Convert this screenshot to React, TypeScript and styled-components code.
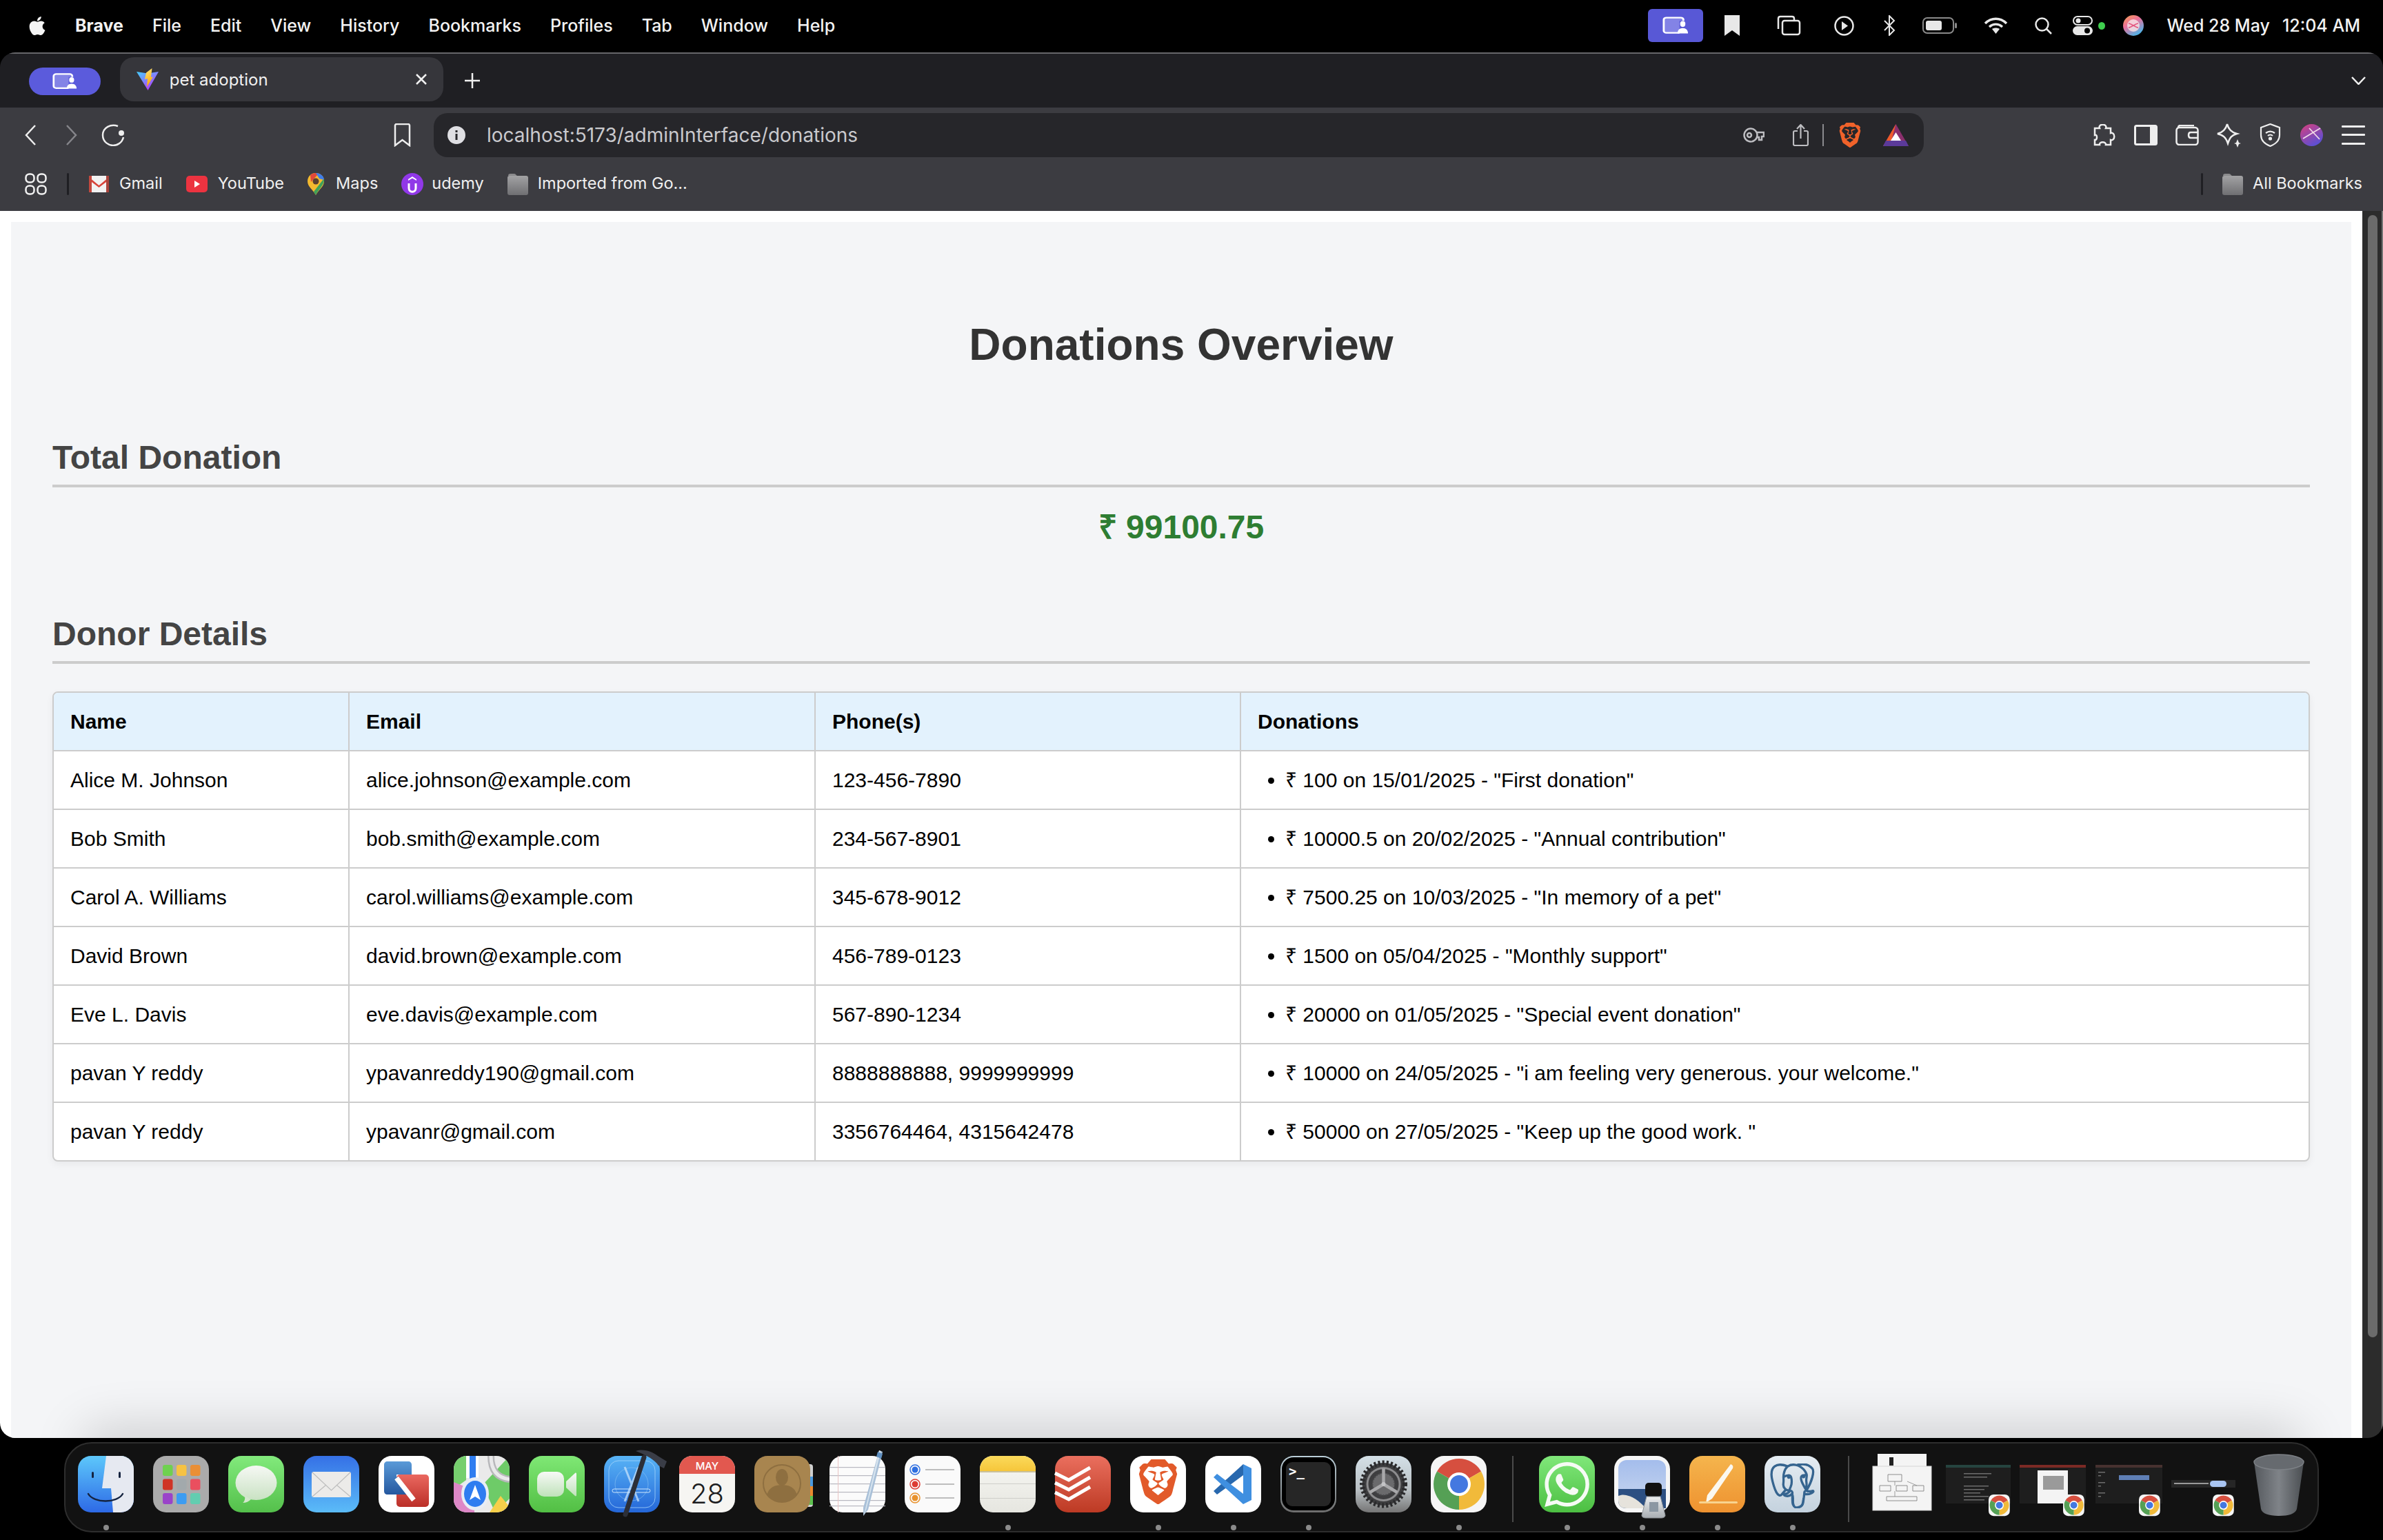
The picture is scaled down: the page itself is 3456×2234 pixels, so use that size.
import React from 'react'
import styled, { createGlobalStyle } from 'styled-components'
import { FaApple } from 'react-icons/fa'
import { SiBrave, SiPostgresql, SiWhatsapp } from 'react-icons/si'

const sysFont = `Inter, "Noto Sans", "Liberation Sans", sans-serif`

const GlobalStyle = createGlobalStyle`
  html, body {
    margin: 0;
    padding: 0;
    background: #000;
    overflow: hidden;
  }
  * { box-sizing: border-box; }
`

const Screen = styled.div`
  width: 3456px;
  height: 2234px;
  background: #000;
  display: flex;
  flex-direction: column;
  overflow: hidden;
`

/* ---------- mac menu bar ---------- */

const MenuBar = styled.div`
  height: 76px;
  flex-shrink: 0;
  display: flex;
  align-items: center;
  padding: 0 33px 2px 41px;
  color: #f2f2f2;
  font-family: ${sysFont};
  font-size: 25px;
  font-weight: 500;
`

const MenuList = styled.div`
  display: flex;
  align-items: center;
  gap: 42px;
`

const AppleMark = styled(FaApple)`
  width: 26px;
  height: 31px;
  color: #f5f5f5;
`

const AppName = styled.span`
  font-weight: 700;
`

const StatusArea = styled.div`
  margin-left: auto;
  display: flex;
  align-items: center;
  color: #e8e8e8;
`

const Ico = styled.svg<{ $ml?: number }>`
  display: block;
  flex-shrink: 0;
  margin-left: ${p => p.$ml || 0}px;
`

const SharePill = styled.div`
  width: 80px;
  height: 48px;
  border-radius: 6px;
  background: #5858d6;
  display: flex;
  align-items: center;
  justify-content: center;
`

const GreenDot = styled.span`
  width: 10px;
  height: 11px;
  margin-left: 8px;
  border-radius: 50%;
  background: #3fcf4e;
`

const Clock = styled.div`
  margin-left: 33px;
  display: flex;
  gap: 18px;
  color: #f2f2f2;
  white-space: nowrap;
`

/* ---------- browser window ---------- */

const BrowserWindow = styled.div`
  height: 2010px;
  flex-shrink: 0;
  display: flex;
  flex-direction: column;
  border-radius: 22px;
  overflow: hidden;
  position: relative;
`

const TabStrip = styled.div`
  height: 80px;
  flex-shrink: 0;
  display: flex;
  align-items: center;
  background: #1f1f23;
  border-top: 2px solid #67676a;
  padding: 0 25px 0 42px;
  color: #f0f0f0;
  font-family: ${sysFont};
`

const ProfilePill = styled.div`
  width: 104px;
  height: 40px;
  margin-top: 2px;
  border-radius: 20px;
  background: #5b5bdc;
  display: flex;
  align-items: center;
  justify-content: center;
`

const Tab = styled.div`
  width: 470px;
  height: 64px;
  margin-left: 28px;
  margin-top: -4px;
  padding: 0 24px;
  border-radius: 20px;
  background: #36363b;
  display: flex;
  align-items: center;
  font-size: 24px;
`

const TabTitle = styled.span`
  margin-left: 16px;
`

const TabClose = styled.svg`
  margin-left: auto;
`

const Toolbar = styled.div`
  height: 72px;
  flex-shrink: 0;
  display: flex;
  align-items: flex-end;
  background: #3c3c41;
  padding: 0 26px 0 36px;
  color: #eeeeee;
`

const ToolbarSlot = styled.div`
  height: 64px;
  display: flex;
  align-items: center;
`

const UrlBar = styled.div`
  width: 2161px;
  height: 64px;
  margin-left: 33px;
  padding: 0 22px 0 20px;
  border-radius: 20px;
  background: #26262a;
  display: flex;
  align-items: center;
  font-family: ${sysFont};
  font-size: 28px;
  color: #c9c9cd;
`

const UrlText = styled.span`
  margin-left: 31px;
`

const UrlActions = styled.div`
  margin-left: auto;
  display: flex;
  align-items: center;
  color: #bdbdc1;
`

const UrlDivider = styled.span`
  width: 2px;
  height: 32px;
  margin-left: 20px;
  background: #8a8a8e;
`

const ToolbarRight = styled.div`
  margin-left: auto;
  display: flex;
  align-items: center;
`

const BookmarksBar = styled.div`
  height: 78px;
  flex-shrink: 0;
  display: flex;
  align-items: center;
  background: #3c3c41;
  padding: 0 30px 0 36px;
  color: #f0f0f0;
  font-family: ${sysFont};
  font-size: 23.5px;
`

const BarDivider = styled.span<{ $last?: boolean }>`
  width: 3px;
  height: 32px;
  margin-left: ${p => (p.$last ? 'auto' : '29px')};
  border-radius: 2px;
  background: #1f1f23;
`

const BookmarkList = styled.div`
  margin-left: 29px;
  display: flex;
  align-items: center;
  gap: 34px;
`

const Bookmark = styled.div<{ $gap?: number }>`
  display: flex;
  align-items: center;
  gap: ${p => p.$gap || 15}px;
  white-space: nowrap;

  & > span {
    padding-bottom: 3px;
  }
`

const AllBookmarks = styled(Bookmark)`
  margin-left: 28px;
`

const Viewport = styled.div`
  flex: 1;
  min-height: 0;
  display: flex;
`

const PageFrame = styled.main`
  flex: 1;
  padding: 16px 16px 0;
  background: #fff;
  display: flex;
  position: relative;
  overflow: hidden;
`

/* dock shadow that falls over the bottom of the page */
const DockShadow = styled.div`
  position: absolute;
  left: 130px;
  right: 100px;
  bottom: -40px;
  height: 40px;
  border-radius: 20px;
  box-shadow: 0 0 70px 14px rgba(0, 0, 0, 0.17);
`

const ScrollTrack = styled.div`
  width: 30px;
  flex-shrink: 0;
  padding: 6px 6px 0 8px;
  background: #2c2c2c;
  border-right: 2px solid #747474;
`

const ScrollThumb = styled.div`
  height: 1628px;
  border-radius: 8px;
  background: #6b6b6b;
`

/* ---------- page content ---------- */

const Page = styled.div`
  flex: 1;
  padding: 96px 60px 0;
  background: #f4f5f7;
  font-family: "Liberation Sans", Arial, sans-serif;
`

const PageTitle = styled.h1`
  margin: 45px 0 100px;
  font-size: 64px;
  line-height: 74px;
  font-weight: 700;
  color: #333;
  text-align: center;
`

const Section = styled.section`
  margin-bottom: 101px;
`

const SectionTitle = styled.h2`
  margin: 0;
  padding-bottom: 12px;
  border-bottom: 4px solid #ccc;
  font-size: 48px;
  line-height: 54px;
  font-weight: 700;
  color: #444;
`

const TotalAmount = styled.div`
  margin-top: 31px;
  font-size: 48px;
  line-height: 54px;
  font-weight: 700;
  color: #2e7d32;
  text-align: center;
`

const TableWrap = styled.div`
  margin-top: 40px;
  border: 2px solid #ccc;
  border-radius: 8px;
  overflow: hidden;
  background: #fff;
  box-shadow: 0 4px 12px rgba(0, 0, 0, 0.05);
`

const Table = styled.table`
  width: 100%;
  border-collapse: collapse;
  table-layout: fixed;
  font-size: 30px;
  line-height: 35px;
  color: #000;
`

const HeadCell = styled.th`
  padding: 24px;
  background: #e3f2fd;
  border-left: 2px solid #ccc;
  border-bottom: 2px solid #ccc;
  font-weight: 700;
  text-align: left;

  &:first-child {
    border-left: none;
  }
`

const Cell = styled.td`
  padding: 24px;
  border-left: 2px solid #ccc;
  border-top: 2px solid #ccc;
  vertical-align: top;

  &:first-child {
    border-left: none;
  }
`

const DonationList = styled.ul`
  margin: 0;
  padding: 0 0 0 40px;
`

/* ---------- dock ---------- */

const Dock = styled.div`
  width: 3270px;
  height: 131px;
  margin: 6px 0 0 93px;
  padding: 18px 0 0 18px;
  flex-shrink: 0;
  display: flex;
  gap: 28px;
  border: 2px solid #2e2e2e;
  border-radius: 40px;
  background: #121212;
`

const DockItem = styled.div`
  width: 81px;
  flex-shrink: 0;
  display: flex;
  flex-direction: column;
  align-items: center;
`

const DockIcon = styled.svg`
  display: block;
  width: 81px;
  height: 82px;
  overflow: visible;
  flex-shrink: 0;
`

const RunDot = styled.span<{ $on?: boolean }>`
  width: 8px;
  height: 8px;
  margin-top: 18px;
  border-radius: 50%;
  background: ${p => (p.$on ? '#8b8b8b' : 'transparent')};
`

const DockDivider = styled.span<{ $l: number; $r: number }>`
  width: 2px;
  height: 96px;
  margin: 0 ${p => p.$r}px 0 ${p => p.$l}px;
  flex-shrink: 0;
  background: #4a4a4a;
`

const ThumbRow = styled.div`
  display: flex;
  margin-top: -3px;
`

const Thumb = styled.svg<{ $ml: number }>`
  display: block;
  height: 90px;
  margin-left: ${p => p.$ml}px;
  overflow: visible;
  flex-shrink: 0;
`

/* ---------- data ---------- */

const menuItems = ['File', 'Edit', 'View', 'History', 'Bookmarks', 'Profiles', 'Tab', 'Window', 'Help']

const donors = [
  { name: 'Alice M. Johnson', email: 'alice.johnson@example.com', phone: '123-456-7890', donation: '₹ 100 on 15/01/2025 - "First donation"' },
  { name: 'Bob Smith', email: 'bob.smith@example.com', phone: '234-567-8901', donation: '₹ 10000.5 on 20/02/2025 - "Annual contribution"' },
  { name: 'Carol A. Williams', email: 'carol.williams@example.com', phone: '345-678-9012', donation: '₹ 7500.25 on 10/03/2025 - "In memory of a pet"' },
  { name: 'David Brown', email: 'david.brown@example.com', phone: '456-789-0123', donation: '₹ 1500 on 05/04/2025 - "Monthly support"' },
  { name: 'Eve L. Davis', email: 'eve.davis@example.com', phone: '567-890-1234', donation: '₹ 20000 on 01/05/2025 - "Special event donation"' },
  { name: 'pavan Y reddy', email: 'ypavanreddy190@gmail.com', phone: '8888888888, 9999999999', donation: '₹ 10000 on 24/05/2025 - "i am feeling very generous. your welcome."' },
  { name: 'pavan Y reddy', email: 'ypavanr@gmail.com', phone: '3356764464, 4315642478', donation: '₹ 50000 on 27/05/2025 - "Keep up the good work. "' },
]

/* ---------- small browser / menu icons ---------- */

const ShareScreenIcon = ({ w, h, cut }: { w: number; h: number; cut: string }) => (
  <svg width={w} height={h} viewBox="0 0 40 34" preserveAspectRatio="none">
    <rect x="2" y="2" width="30" height="29" rx="4" fill="#8383e6" stroke="#fff" strokeWidth="3" />
    <rect x="26" y="8" width="14" height="26" fill={cut} />
    <ellipse cx="31" cy="14" rx="4" ry="5.500" fill="#fff" />
    <path d="M23 32c0-6 3-10 8-10s8 4 8 10z" fill="#fff" />
  </svg>
)

const ViteLogo = () => (
  <Ico width={32} height={32} viewBox="0 0 32 32">
    <defs>
      <linearGradient id="viteA" x1="0" y1="0" x2="0.7" y2="1">
        <stop offset="0" stopColor="#41d1ff" />
        <stop offset="1" stopColor="#bd34fe" />
      </linearGradient>
      <linearGradient id="viteB" x1="0" y1="0" x2="0.3" y2="1">
        <stop offset="0" stopColor="#ffea83" />
        <stop offset="1" stopColor="#ffa800" />
      </linearGradient>
    </defs>
    <path d="M0 5l16 2.500L32 5 16.500 32z" fill="url(#viteA)" />
    <path d="M14 6.500L22.500 0 21 13l3-.5L15 27l1-12-4 1z" fill="url(#viteB)" />
  </Ico>
)

const FolderIcon = () => (
  <Ico width={30} height={32} viewBox="0 0 30 32">
    <defs>
      <linearGradient id="folderG" x1="0" y1="0" x2="0" y2="1">
        <stop offset="0" stopColor="#a2a2a4" />
        <stop offset="1" stopColor="#6f6f72" />
      </linearGradient>
    </defs>
    <path d="M1 4c0-2 1-3 3-3h6c2 0 3 3 4 3z" fill="#8a8a8c" />
    <rect y="4" width="30" height="28" rx="3" fill="url(#folderG)" />
  </Ico>
)

/* ---------- dock icons, all on an 81x82 box ---------- */

const Squircle = ({ fill }: { fill: string }) => <rect width="81" height="82" rx="19" fill={fill} />

const FinderIcon = () => (
  <DockIcon viewBox="0 0 81 82">
    <defs>
      <linearGradient id="finderG" x1="0" y1="0" x2="0" y2="1">
        <stop offset="0" stopColor="#5dc8fb" />
        <stop offset="1" stopColor="#2d69e6" />
      </linearGradient>
      <clipPath id="finderClip"><rect width="81" height="82" rx="19" /></clipPath>
    </defs>
    <Squircle fill="url(#finderG)" />
    <path d="M41 0L35 47H48L51 82H81V0Z" fill="#e6e9f1" clipPath="url(#finderClip)" />
    <rect x="20" y="23" width="3" height="9" rx="1.500" fill="#15233f" />
    <rect x="59" y="23" width="3" height="9" rx="1.500" fill="#15233f" />
    <path d="M15 55c8 14 42 14 50 0" fill="none" stroke="#15233f" strokeWidth="2.500" strokeLinecap="round" />
  </DockIcon>
)

const launchColors = ['#6fd14f', '#f6c243', '#ea8f36', '#cf3426', '#a2a9ac', '#ea4f5f', '#9a43c9', '#3d9cf1', '#62cdb0']

const LaunchpadIcon = () => (
  <DockIcon viewBox="0 0 81 82">
    <Squircle fill="#ababab" />
    {launchColors.map((c, i) => (
      <rect key={c} x={14 + (i % 3) * 20} y={13 + Math.floor(i / 3) * 20.5} width="14.500" height="16" rx="3" fill={c} />
    ))}
  </DockIcon>
)

const MessagesIcon = () => (
  <DockIcon viewBox="0 0 81 82">
    <defs>
      <linearGradient id="msgG" x1="0" y1="0" x2="0" y2="1">
        <stop offset="0" stopColor="#82ea7c" />
        <stop offset="1" stopColor="#54c04b" />
      </linearGradient>
      <linearGradient id="msgB" x1="0" y1="0" x2="0" y2="1">
        <stop offset="0" stopColor="#f6f8f4" />
        <stop offset="1" stopColor="#c9e2c3" />
      </linearGradient>
    </defs>
    <Squircle fill="url(#msgG)" />
    <ellipse cx="40.500" cy="39" rx="30" ry="25" fill="url(#msgB)" />
    <path d="M24 58c1 5-1 9-3 10 5 0 9-2 12-5z" fill="#d3e7cd" />
  </DockIcon>
)

const MailIcon = () => (
  <DockIcon viewBox="0 0 81 82">
    <defs>
      <linearGradient id="mailG" x1="0" y1="0" x2="0" y2="1">
        <stop offset="0" stopColor="#3570e6" />
        <stop offset="1" stopColor="#5bbcf8" />
      </linearGradient>
    </defs>
    <Squircle fill="url(#mailG)" />
    <rect x="12" y="23" width="57" height="37" rx="3" fill="#ecebe9" />
    <path d="M13 24l27.500 26L68 24M13 59l20-17M68 59L48 42" fill="none" stroke="#bdbdbd" strokeWidth="1.200" />
  </DockIcon>
)

const ParallelsIcon = () => (
  <DockIcon viewBox="0 0 81 82">
    <defs>
      <linearGradient id="parB" x1="0" y1="0" x2="0" y2="1">
        <stop offset="0" stopColor="#5a9ad8" />
        <stop offset="1" stopColor="#25589f" />
      </linearGradient>
      <linearGradient id="parR" x1="0" y1="0" x2="0" y2="1">
        <stop offset="0" stopColor="#ea6860" />
        <stop offset="1" stopColor="#bb2f28" />
      </linearGradient>
    </defs>
    <Squircle fill="#ffffff" />
    <rect x="26" y="27" width="47" height="47" rx="5" fill="url(#parR)" />
    <path d="M13 8h30c3 0 5 2 5 5v14H26v3l22 26H13c-3 0-5-2-5-5V13c0-3 2-5 5-5z" fill="url(#parB)" />
    <path d="M26 32l25 32" stroke="#fff" strokeWidth="7" />
  </DockIcon>
)

const MapsIcon = () => (
  <DockIcon viewBox="0 0 81 82">
    <defs><clipPath id="mapClip"><rect width="81" height="82" rx="19" /></clipPath></defs>
    <g clipPath="url(#mapClip)">
      <rect width="81" height="82" fill="#eaeaea" />
      <path d="M42 42L81 0V62L60 82z" fill="#6ecb68" />
      <path d="M0 0H18V35L0 48z" fill="#76cf6e" />
      <path d="M0 38L30 50V82H0z" fill="#dd87c7" />
      <path d="M52 82l16-24 13 16v8z" fill="#f6cf4a" />
      <path d="M18 0h18v32H18z" fill="#fff" />
      <rect x="23" y="0" width="9" height="34" fill="#2f7df0" />
      <path d="M54 0c0 22 10 32 27 34" fill="none" stroke="#b8b8bb" strokeWidth="10" />
      <path d="M54 0c0 22 10 32 27 34" fill="none" stroke="#e9e9ea" strokeWidth="5" />
    </g>
    <ellipse cx="31" cy="55" rx="20" ry="24" fill="#e8edf5" />
    <ellipse cx="31" cy="55" rx="16" ry="19" fill="#2f7df0" />
    <path d="M31 42l8 22-8-5-8 5z" fill="#fff" />
  </DockIcon>
)

const FaceTimeIcon = () => (
  <DockIcon viewBox="0 0 81 82">
    <defs>
      <linearGradient id="ftG" x1="0" y1="0" x2="0" y2="1">
        <stop offset="0" stopColor="#7fe875" />
        <stop offset="1" stopColor="#52bf44" />
      </linearGradient>
      <linearGradient id="ftC" x1="0" y1="0" x2="0" y2="1">
        <stop offset="0" stopColor="#f7f9f6" />
        <stop offset="1" stopColor="#bfe2ba" />
      </linearGradient>
    </defs>
    <Squircle fill="url(#ftG)" />
    <rect x="12" y="23" width="39" height="36" rx="10" fill="url(#ftC)" />
    <path d="M54 37l13-12c1-1 2 0 2 1v31c0 1-1 2-2 1L54 46z" fill="url(#ftC)" />
  </DockIcon>
)

const XcodeIcon = () => (
  <DockIcon viewBox="0 0 81 82">
    <defs>
      <linearGradient id="xcG" x1="0" y1="0" x2="0" y2="1">
        <stop offset="0" stopColor="#58b4f6" />
        <stop offset="1" stopColor="#2466d8" />
      </linearGradient>
    </defs>
    <Squircle fill="url(#xcG)" />
    <rect x="7" y="7" width="67" height="68" rx="14" fill="none" stroke="#a6d4fa" strokeWidth="0.800" />
    <circle cx="40" cy="41" r="24" fill="none" stroke="#8cc4f4" strokeWidth="0.600" />
    <path d="M30 16l20 50M50 16L30 66" stroke="#cfe7fc" strokeWidth="3" fill="none" opacity="0.7" />
    <rect x="12" y="48" width="55" height="5" rx="2.500" fill="none" stroke="#cfe7fc" strokeWidth="1" />
    <path d="M31 85L58 2" stroke="#2c2f38" strokeWidth="7" strokeLinecap="round" />
    <path d="M46 -7C58 -11 70 -6 78 0L91 8 87 18 79 14C74 6 62 -1 46 -7Z" fill="#3a3d47" />
  </DockIcon>
)

const DockCalendarDay = styled.text`
  font-family: ${sysFont};
  fill: #1d1d1f;
  font-size: 40px;
  font-weight: 300;
`

const DockCalendarMonth = styled.text`
  font-family: ${sysFont};
  fill: #fff;
  font-size: 15px;
  font-weight: 500;
`

const CalendarIcon = () => (
  <DockIcon viewBox="0 0 81 82">
    <defs><clipPath id="calClip"><rect width="81" height="82" rx="19" /></clipPath></defs>
    <Squircle fill="#f6f5f2" />
    <rect width="81" height="26" fill="#e2584f" clipPath="url(#calClip)" />
    <DockCalendarMonth x="40.500" y="20" textAnchor="middle">MAY</DockCalendarMonth>
    <DockCalendarDay x="40.500" y="69" textAnchor="middle">28</DockCalendarDay>
  </DockIcon>
)

const ContactsIcon = () => (
  <DockIcon viewBox="0 0 81 82">
    <rect x="70" y="12" width="15" height="62" rx="4" fill="#d0d0d0" />
    <rect x="78" y="30" width="7" height="14" fill="#4a9ae0" />
    <rect x="78" y="44" width="7" height="14" fill="#e98a2f" />
    <rect x="78" y="58" width="7" height="13" fill="#5cc24e" />
    <Squircle fill="#a8854f" />
    <circle cx="40" cy="40" r="27" fill="none" stroke="#8e6f40" strokeWidth="2" />
    <ellipse cx="40" cy="31" rx="9" ry="12" fill="#8e6f40" />
    <path d="M18 57c3-12 13-15 22-15s19 3 22 15c-6 7-14 10-22 10s-16-3-22-10z" fill="#8e6f40" />
  </DockIcon>
)

const TextEditIcon = () => (
  <DockIcon viewBox="0 0 81 82">
    <Squircle fill="#fbfbfb" />
    {[16, 28, 40, 52, 64, 72].map(y => (
      <rect key={y} y={y} width="81" height="1.200" fill="#b8b8c0" />
    ))}
    <rect x="12" width="1" height="82" fill="#e8c4c4" />
    <path d="M72 -8l5 2-21 84-7 9 0-12z" fill="#a9c0d8" />
    <path d="M72 -8l2.500 1-21 84-4 10z" fill="#d6e3ee" />
    <path d="M70 -6l7 3-2 7-7-3z" fill="#5f8fc0" />
  </DockIcon>
)

const RemindersIcon = () => (
  <DockIcon viewBox="0 0 81 82">
    <Squircle fill="#fafafa" />
    {[['#2f6fe0', 20], ['#dd3c34', 41], ['#e8922d', 61]].map(([c, y]) => (
      <g key={c as string}>
        <circle cx="15" cy={y as number} r="7" fill="none" stroke={c as string} strokeWidth="1.500" />
        <circle cx="15" cy={y as number} r="4.500" fill={c as string} />
        <rect x="30" y={(y as number) - 0.8} width="42" height="1.600" fill="#aeaeae" />
      </g>
    ))}
  </DockIcon>
)

const NotesIcon = () => (
  <DockIcon viewBox="0 0 81 82">
    <defs>
      <linearGradient id="notesG" x1="0" y1="0" x2="0" y2="1">
        <stop offset="0" stopColor="#fbda5b" />
        <stop offset="1" stopColor="#f6c63a" />
      </linearGradient>
      <linearGradient id="notesP" x1="0" y1="0" x2="0" y2="1">
        <stop offset="0" stopColor="#f8f8f4" />
        <stop offset="1" stopColor="#e6e6e0" />
      </linearGradient>
      <clipPath id="notesClip"><rect width="81" height="82" rx="19" /></clipPath>
    </defs>
    <Squircle fill="url(#notesP)" />
    <rect width="81" height="22" fill="url(#notesG)" clipPath="url(#notesClip)" />
    <rect y="22" width="81" height="2" fill="#c9c09a" />
    <rect y="40" width="81" height="1" fill="#cfcfca" />
    <rect y="61" width="81" height="1" fill="#cfcfca" />
  </DockIcon>
)

const TodoistIcon = () => (
  <DockIcon viewBox="0 0 81 82">
    <defs>
      <linearGradient id="todoG" x1="0" y1="0" x2="0" y2="1">
        <stop offset="0" stopColor="#ea6f5e" />
        <stop offset="1" stopColor="#bd3a24" />
      </linearGradient>
    </defs>
    <Squircle fill="url(#todoG)" />
    {[0, 14, 28].map(d => (
      <path key={d} d={`M0 ${25 + d}L20 ${35 + d}L51 ${17 + d}`} fill="none" stroke="#fff" strokeWidth="5" />
    ))}
  </DockIcon>
)

const BraveDockIcon = () => (
  <DockIcon viewBox="0 0 81 82">
    <Squircle fill="#ffffff" />
    <SiBrave x={8} y={5} size={65} color="#e25a2a" />
  </DockIcon>
)

const VSCodeIcon = () => (
  <DockIcon viewBox="0 0 81 82">
    <Squircle fill="#ffffff" />
    <path d="M55 12l12 6v46l-12 6z" fill="#3f8fe0" />
    <path d="M55 12L12 51l5 5 38-28z" fill="#2868ae" />
    <path d="M12 31l5-5 38 29v15z" fill="#3f8fe0" />
  </DockIcon>
)

const TerminalPrompt = styled.text`
  font-family: "DejaVu Sans Mono", monospace;
  fill: #fff;
  font-size: 19px;
  font-weight: 700;
`

const TerminalIcon = () => (
  <DockIcon viewBox="0 0 81 82">
    <defs>
      <linearGradient id="termG" x1="0" y1="0" x2="0" y2="1">
        <stop offset="0" stopColor="#bcd0da" />
        <stop offset="1" stopColor="#6d6d6d" />
      </linearGradient>
    </defs>
    <Squircle fill="url(#termG)" />
    <rect x="2" y="2" width="77" height="77" rx="17" fill="#000" />
    <rect x="8" y="9" width="65" height="64" rx="9" fill="#262626" />
    <TerminalPrompt x="12" y="29">&gt;_</TerminalPrompt>
  </DockIcon>
)

const SettingsIcon = () => (
  <DockIcon viewBox="0 0 81 82">
    <defs>
      <linearGradient id="setG" x1="0" y1="0" x2="0" y2="1">
        <stop offset="0" stopColor="#d4e0e7" />
        <stop offset="0.6" stopColor="#b9c0c4" />
        <stop offset="1" stopColor="#757575" />
      </linearGradient>
    </defs>
    <Squircle fill="url(#setG)" />
    <circle cx="40.500" cy="41" r="31" fill="#3d3d3f" stroke="#2a2a2c" strokeWidth="7" strokeDasharray="3 3" />
    <circle cx="40.500" cy="41" r="25" fill="#8c8c8e" />
    <circle cx="40.500" cy="41" r="22" fill="#3e3e40" />
    <circle cx="40.500" cy="41" r="16" fill="#6a6a6c" stroke="#4a4a4c" strokeWidth="2" strokeDasharray="2 2" />
    <path d="M40.500 41V18M40.500 41L20.500 53M40.500 41L60.500 53" stroke="#a8a8aa" strokeWidth="4.500" />
    <circle cx="40.500" cy="41" r="3" fill="#c4c4c6" />
  </DockIcon>
)

const ChromeWheel = () => (
  <>
    <path d="M41 41L9 22.500A37 37 0 0 1 73 22.500Z" fill="#d64f3f" />
    <path d="M41 41L73 22.500A37 37 0 0 1 41 78Z" fill="#f1ba3a" />
    <path d="M41 41L41 78A37 37 0 0 1 9 22.500Z" fill="#55a055" />
    <circle cx="41" cy="41" r="17" fill="#fff" />
    <circle cx="41" cy="41" r="13" fill="#4478e0" />
  </>
)

const ChromeIcon = () => (
  <DockIcon viewBox="0 0 81 82">
    <Squircle fill="#f5f5f5" />
    <ChromeWheel />
  </DockIcon>
)

const WhatsAppIcon = () => (
  <DockIcon viewBox="0 0 81 82">
    <defs>
      <linearGradient id="waG" x1="0" y1="0" x2="0" y2="1">
        <stop offset="0" stopColor="#80e87a" />
        <stop offset="1" stopColor="#4cbf42" />
      </linearGradient>
    </defs>
    <Squircle fill="url(#waG)" />
    <SiWhatsapp x={8} y={9} size={65} color="#f6fbf5" />
  </DockIcon>
)

const PreviewIcon = () => (
  <DockIcon viewBox="0 0 81 82">
    <defs>
      <linearGradient id="prevS" x1="0" y1="0" x2="0" y2="1">
        <stop offset="0" stopColor="#a4bdec" />
        <stop offset="1" stopColor="#cbd8ef" />
      </linearGradient>
      <linearGradient id="prevG" x1="0" y1="0" x2="0" y2="1">
        <stop offset="0" stopColor="#eceef0" />
        <stop offset="1" stopColor="#a8adb2" />
      </linearGradient>
    </defs>
    <Squircle fill="#f6f6f6" />
    <rect x="6" y="6" width="69" height="70" rx="12" fill="url(#prevS)" />
    <path d="M6 48h69v28H18C10 76 6 72 6 64z" fill="#2c4f82" />
    <path d="M6 58c12-6 30 6 40 18H18C10 76 6 72 6 64z" fill="#e6e3dc" />
    <rect x="45" y="39" width="24" height="20" rx="5" fill="#111" />
    <path d="M47 59h20l7 27c0 3-3 4-6 4H46c-3 0-6-1-6-4z" fill="url(#prevG)" stroke="#8d9297" strokeWidth="1" />
    <rect x="51" y="67" width="13" height="14" fill="#8b97a3" />
  </DockIcon>
)

const PagesIcon = () => (
  <DockIcon viewBox="0 0 81 82">
    <defs>
      <linearGradient id="pagesG" x1="0" y1="0" x2="0" y2="1">
        <stop offset="0" stopColor="#f5b54d" />
        <stop offset="1" stopColor="#ee9230" />
      </linearGradient>
    </defs>
    <Squircle fill="url(#pagesG)" />
    <path d="M60 12c3 1 4 3 3 6L33 62l-9 6 2-11z" fill="#fbf8f0" />
    <rect x="14" y="66" width="56" height="3" rx="1.500" fill="#f8d38f" />
  </DockIcon>
)

const PostgresIcon = () => (
  <DockIcon viewBox="0 0 81 82">
    <defs>
      <linearGradient id="pgG" x1="0" y1="0" x2="0" y2="1">
        <stop offset="0" stopColor="#e6edf3" />
        <stop offset="1" stopColor="#c4d2de" />
      </linearGradient>
    </defs>
    <Squircle fill="url(#pgG)" />
    <SiPostgresql x={8} y={11} size={65} color="#35648f" stroke="#35648f" strokeWidth="0.5" />
  </DockIcon>
)

const MiniChrome = ({ x }: { x: number }) => (
  <g transform={`translate(${x} 59) scale(0.38 0.38)`}>
    <rect width="81" height="82" rx="19" fill="#f5f5f5" />
    <ChromeWheel />
  </g>
)

const ThumbLines = ({ x, y, w, n }: { x: number; y: number; w: number; n: number }) => (
  <>
    {Array.from({ length: n }).map((_, i) => (
      <rect key={i} x={x} y={y + i * 5} width={w - (i % 3) * 6} height="1.500" fill="#6d6d6d" />
    ))}
  </>
)

const TrashIcon = () => (
  <Thumb $ml={27} width="72" viewBox="0 0 72 90">
    <defs>
      <linearGradient id="trashG" x1="0" y1="0" x2="1" y2="0">
        <stop offset="0" stopColor="#55595e" />
        <stop offset="0.5" stopColor="#7f8388" />
        <stop offset="1" stopColor="#4a4e52" />
      </linearGradient>
    </defs>
    <path d="M0 12L10 80c2 7 12 10 26 10s24-3 26-10L72 12z" fill="url(#trashG)" />
    <ellipse cx="36" cy="12" rx="36" ry="11" fill="#666a6f" stroke="#7d8186" strokeWidth="1.500" />
  </Thumb>
)

const DockThumbs = () => (
  <ThumbRow>
    <Thumb $ml={0} width="85" viewBox="0 0 85 90">
      <rect x="7" width="71" height="30" fill="#f4f4f4" />
      <rect y="18" width="85" height="64" fill="#f4f4f4" stroke="#d4d4d4" />
      <path d="M22 30h20v10H22zM10 46h16v8H10zM34 46h16v8H34zM58 46h16v8H58zM20 62h44v6H20z" fill="none" stroke="#777" strokeWidth="0.800" />
      <path d="M32 40v6M50 40l14 6M32 54v8" stroke="#888" strokeWidth="0.800" />
      <rect x="24" y="5" width="6" height="12" fill="#222" />
    </Thumb>
    <Thumb $ml={21} width="94" viewBox="0 0 94 90">
      <rect y="16" width="94" height="56" fill="#1e1e1e" />
      <rect y="16" width="94" height="4" fill="#26443f" />
      <ThumbLines x={26} y={28} w={40} n={2} />
      <ThumbLines x={26} y={46} w={36} n={5} />
      <MiniChrome x={62} />
    </Thumb>
    <Thumb $ml={13} width="96" viewBox="0 0 96 90">
      <rect y="16" width="96" height="56" fill="#1e1e1e" />
      <rect y="16" width="96" height="4" fill="#7c2a25" />
      <rect x="26" y="24" width="44" height="48" fill="#f4f4f4" />
      <rect x="34" y="32" width="30" height="20" fill="#9a9a9a" />
      <MiniChrome x={63} />
    </Thumb>
    <Thumb $ml={14} width="97" viewBox="0 0 97 90">
      <rect y="16" width="97" height="56" fill="#1e1e1e" />
      <rect y="16" width="97" height="4" fill="#47312f" />
      <rect x="34" y="31" width="44" height="7" fill="#5f7fb5" />
      <ThumbLines x={4} y={26} w={10} n={8} />
      <MiniChrome x={63} />
    </Thumb>
    <Thumb $ml={13} width="93" viewBox="0 0 93 90">
      <rect y="38" width="93" height="11" fill="#262626" />
      <rect x="4" y="42" width="50" height="2" fill="#9a9a9a" />
      <rect x="56" y="39" width="24" height="9" rx="4.500" fill="#a9c5f2" />
      <MiniChrome x={60} />
    </Thumb>
    <TrashIcon />
  </ThumbRow>
)

const dockApps: { Icon: () => React.JSX.Element; on?: boolean }[] = [
  { Icon: FinderIcon, on: true },
  { Icon: LaunchpadIcon },
  { Icon: MessagesIcon },
  { Icon: MailIcon },
  { Icon: ParallelsIcon },
  { Icon: MapsIcon },
  { Icon: FaceTimeIcon },
  { Icon: XcodeIcon },
  { Icon: CalendarIcon },
  { Icon: ContactsIcon },
  { Icon: TextEditIcon },
  { Icon: RemindersIcon },
  { Icon: NotesIcon, on: true },
  { Icon: TodoistIcon },
  { Icon: BraveDockIcon, on: true },
  { Icon: VSCodeIcon, on: true },
  { Icon: TerminalIcon, on: true },
  { Icon: SettingsIcon },
  { Icon: ChromeIcon, on: true },
]

const pinnedApps: { Icon: () => React.JSX.Element; on?: boolean }[] = [
  { Icon: WhatsAppIcon, on: true },
  { Icon: PreviewIcon, on: true },
  { Icon: PagesIcon, on: true },
  { Icon: PostgresIcon, on: true },
]

const renderDockItem = ({ Icon, on }: { Icon: () => React.JSX.Element; on?: boolean }, i: number) => (
  <DockItem key={i}>
    <Icon />
    <RunDot $on={on} />
  </DockItem>
)

const App: React.FC = () => {
  return (
    <Screen>
      <GlobalStyle />

      <MenuBar>
        <MenuList>
          <AppleMark />
          <AppName>Brave</AppName>
          {menuItems.map(item => (
            <span key={item}>{item}</span>
          ))}
        </MenuList>
        <StatusArea>
          <SharePill><ShareScreenIcon w={38} h={26} cut="#5858d6" /></SharePill>
          <Ico $ml={29} width={26} height={30} viewBox="0 0 26 30">
            <path d="M2 0h22v30l-11-8-11 8z" fill="currentColor" />
          </Ico>
          <Ico $ml={52} width={35} height={30} viewBox="0 0 35 30" fill="none" stroke="currentColor" strokeWidth="2.500">
            <rect x="8" y="8" width="25" height="20" rx="3" />
            <path d="M2 20V5c0-2 1-3 3-3h17c2 0 3 1 3 3v3" />
          </Ico>
          <Ico $ml={48} width={29} height={29} viewBox="0 0 29 29" fill="none" stroke="currentColor" strokeWidth="2.500">
            <circle cx="14.500" cy="14.500" r="13" />
            <path d="M11 8l9 6.500-9 6.500z" fill="currentColor" stroke="none" />
          </Ico>
          <Ico $ml={42} width={19} height={30} viewBox="0 0 19 30" fill="none" stroke="currentColor" strokeWidth="2">
            <path d="M2 8l14 14-7 7V1l7 7L2 22" />
          </Ico>
          <Ico $ml={38} width={50} height={24} viewBox="0 0 50 24">
            <rect x="1" y="1" width="44" height="22" rx="6" fill="none" stroke="#8a8a8a" strokeWidth="2" />
            <rect x="5" y="5" width="23" height="14" rx="3" fill="currentColor" />
            <rect x="47" y="8" width="3" height="8" rx="1.500" fill="#8a8a8a" />
          </Ico>
          <Ico $ml={39} width={35} height={25} viewBox="0 0 35 25" fill="none" stroke="currentColor" strokeWidth="3.500">
            <path d="M2 9c9-9 22-9 31 0M8 14c6-5 13-5 19 0" />
            <path d="M12 17c3-2 8-2 11 0l-5.500 7z" fill="currentColor" stroke="none" />
          </Ico>
          <Ico $ml={39} width={25} height={25} viewBox="0 0 25 25" fill="none" stroke="currentColor" strokeWidth="2.500">
            <circle cx="10.500" cy="10.500" r="9" />
            <path d="M17 17l7 7" />
          </Ico>
          <Ico $ml={30} width={29} height={28} viewBox="0 0 29 28">
            <rect x="1" y="1" width="27" height="12" rx="6" fill="none" stroke="currentColor" strokeWidth="2" />
            <circle cx="8" cy="7" r="3.500" fill="currentColor" />
            <rect y="15" width="29" height="13" rx="6.500" fill="currentColor" />
            <circle cx="21" cy="21.500" r="4" fill="#000" />
          </Ico>
          <GreenDot />
          <Ico $ml={26} width={30} height={30} viewBox="0 0 30 30">
            <defs>
              <linearGradient id="siriG" x1="0" y1="0" x2="0.6" y2="1">
                <stop offset="0" stopColor="#f2a24b" />
                <stop offset="0.45" stopColor="#ee6f9a" />
                <stop offset="1" stopColor="#4fb4e8" />
              </linearGradient>
            </defs>
            <circle cx="15" cy="15" r="15" fill="url(#siriG)" />
            <circle cx="15" cy="15" r="9" fill="#f6dfe4" opacity="0.85" />
            <path d="M8 12c4 0 10 6 14 6M8 18c4 0 10-6 14-6" stroke="#e4567f" strokeWidth="1.500" fill="none" />
          </Ico>
          <Clock>
            <span>Wed 28 May</span>
            <span>12:04 AM</span>
          </Clock>
        </StatusArea>
      </MenuBar>

      <BrowserWindow>
        <TabStrip>
          <ProfilePill><ShareScreenIcon w={36} h={24} cut="#5b5bdc" /></ProfilePill>
          <Tab>
            <ViteLogo />
            <TabTitle>pet adoption</TabTitle>
            <TabClose width={16} height={16} viewBox="0 0 16 16" stroke="currentColor" strokeWidth="2.500">
              <path d="M1 1l14 14M15 1L1 15" />
            </TabClose>
          </Tab>
          <Ico $ml={31} width={22} height={22} viewBox="0 0 22 22" stroke="currentColor" strokeWidth="2.500">
            <path d="M11 0v22M0 11h22" />
          </Ico>
          <Ico $ml={2714} width={21} height={12} viewBox="0 0 21 12" fill="none" stroke="currentColor" strokeWidth="2.500">
            <path d="M1 1l9.500 10L20 1" />
          </Ico>
        </TabStrip>

        <Toolbar>
          <ToolbarSlot>
            <Ico width={16} height={30} viewBox="0 0 16 30" fill="none" stroke="currentColor" strokeWidth="2.500">
              <path d="M15 1L2 15l13 14" />
            </Ico>
            <Ico $ml={44} width={16} height={30} viewBox="0 0 16 30" fill="none" stroke="#85858a" strokeWidth="2.500">
              <path d="M1 1l13 14L1 29" />
            </Ico>
            <Ico $ml={35} width={34} height={32} viewBox="0 0 34 32" fill="none" stroke="currentColor" strokeWidth="2.500">
              <path d="M24 3C14-1 2 5 2 16s10 15 15 15 13-3 15-12" />
              <circle cx="29" cy="13" r="4" fill="currentColor" stroke="none" />
            </Ico>
            <Ico $ml={390} width={25} height={34} viewBox="0 0 25 34" fill="none" stroke="currentColor" strokeWidth="2.500">
              <path d="M2 3c0-1 1-2 2-2h17c1 0 2 1 2 2v29l-10.500-8L2 32z" />
            </Ico>
          </ToolbarSlot>
          <UrlBar>
            <Ico width={26} height={26} viewBox="0 0 26 26">
              <circle cx="13" cy="13" r="13" fill="#dfdfe3" />
              <rect x="11.500" y="11" width="3" height="9" fill="#26262a" />
              <rect x="11.500" y="6" width="3" height="3" fill="#26262a" />
            </Ico>
            <UrlText>localhost:5173/adminInterface/donations</UrlText>
            <UrlActions>
              <Ico width={31} height={24} viewBox="0 0 31 24" fill="none" stroke="currentColor" strokeWidth="2.500">
                <circle cx="11" cy="12" r="9.500" />
                <circle cx="9" cy="12" r="3" />
                <path d="M20 8h10v6h-3v5h-4v-4h-3" />
              </Ico>
              <Ico $ml={41} width={23} height={32} viewBox="0 0 23 32" fill="none" stroke="currentColor" strokeWidth="2.200">
                <path d="M7 10H3c-1 0-2 1-2 2v17c0 1 1 2 2 2h17c1 0 2-1 2-2V12c0-1-1-2-2-2h-4" />
                <path d="M11.500 21V2M6 7l5.500-6L17 7" />
              </Ico>
              <UrlDivider />
              <Ico as={SiBrave} $ml={20} size={36} color="#f0622a" />
              <Ico $ml={30} width={37} height={32} viewBox="0 0 37 32">
                <path d="M18.500 0L37 32H0z" fill="#8a2f6d" />
                <path d="M18.500 0L0 32h10z" fill="#ef5b2b" />
                <path d="M18.500 12L26 24H11z" fill="#fff" />
                <path d="M0 32l4-8h29l4 8z" fill="#5b3a9a" />
              </Ico>
            </UrlActions>
          </UrlBar>
          <ToolbarRight>
            <ToolbarSlot>
              <Ico width={34} height={32} viewBox="0 0 34 32" fill="none" stroke="currentColor" strokeWidth="2.500">
                <path d="M4 7h7c-3-7 12-7 9 0h7v7c7-2 7 12 0 10v7h-7c1-5-10-5-9 0H4v-7c4 1 4-9 0-7z" transform="translate(-1 -1)" />
              </Ico>
              <Ico $ml={26} width={34} height={30} viewBox="0 0 34 30">
                <rect x="1.500" y="1.500" width="31" height="27" rx="2" fill="none" stroke="currentColor" strokeWidth="3" />
                <rect x="23" y="1" width="10" height="28" fill="currentColor" />
              </Ico>
              <Ico $ml={26} width={34} height={30} viewBox="0 0 34 30" fill="none" stroke="currentColor" strokeWidth="2.500">
                <rect x="1.500" y="4" width="31" height="25" rx="4" />
                <path d="M4 4c0-2 1-3 3-3h20" />
                <path d="M33 11H22c-2 0-3 2-3 4s1 4 3 4h11" />
              </Ico>
              <Ico $ml={25} width={36} height={36} viewBox="0 0 36 36" fill="none" stroke="currentColor" strokeWidth="2.500">
                <path d="M16 2c2 8 6 12 14 14-7 2-10 5-13 14C14 21 10 18 2 16c8-2 12-6 14-14z" />
                <path d="M31 24l2 5 3 1-3 1-2 5-2-5-3-1 3-1z" fill="currentColor" stroke="none" />
              </Ico>
              <Ico $ml={27} width={31} height={34} viewBox="0 0 31 34" fill="none" stroke="currentColor" strokeWidth="2.200">
                <path d="M15.500 1L29 6v11c0 8-6 13-13.500 16C8 30 2 25 2 17V6z" />
                <path d="M9 14c4-3 9-3 13 0M12 18c2-2 5-2 7 0" />
                <circle cx="15.500" cy="22" r="1.500" fill="currentColor" />
              </Ico>
              <Ico $ml={28} width={33} height={32} viewBox="0 0 33 32">
                <defs>
                  <linearGradient id="avatarG" x1="0" y1="0" x2="0.6" y2="1">
                    <stop offset="0" stopColor="#d9407c" />
                    <stop offset="1" stopColor="#5b4fd4" />
                  </linearGradient>
                </defs>
                <ellipse cx="16.500" cy="16" rx="16.500" ry="16" fill="url(#avatarG)" />
                <path d="M4 21L29 6M13 6l15 16" stroke="#f1d9e8" strokeWidth="1.800" />
              </Ico>
              <Ico $ml={27} width={34} height={28} viewBox="0 0 34 28" fill="currentColor">
                <rect width="34" height="3" rx="1" />
                <rect y="12" width="34" height="3" rx="1" />
                <rect y="25" width="34" height="3" rx="1" />
              </Ico>
            </ToolbarSlot>
          </ToolbarRight>
        </Toolbar>

        <BookmarksBar>
          <Ico width={32} height={32} viewBox="0 0 32 32" fill="none" stroke="currentColor" strokeWidth="2.500">
            <rect x="1.500" y="1.500" width="12" height="12" rx="5" />
            <rect x="18.500" y="1.500" width="12" height="12" rx="5" />
            <rect x="1.500" y="18.500" width="12" height="12" rx="5" />
            <rect x="18.500" y="18.500" width="12" height="12" rx="5" />
          </Ico>
          <BarDivider />
          <BookmarkList>
            <Bookmark>
              <Ico width={29} height={24} viewBox="0 0 29 24">
                <rect width="29" height="24" rx="2" fill="#f2f2f2" />
                <path d="M0 2l14.500 12L29 2v4L14.500 17 0 6z" fill="#d8443a" />
                <rect width="4" height="24" fill="#c2483e" />
                <rect x="25" width="4" height="24" fill="#a9443c" />
              </Ico>
              <span>Gmail</span>
            </Bookmark>
            <Bookmark>
              <Ico width={31} height={24} viewBox="0 0 31 24">
                <rect width="31" height="24" rx="5" fill="#ec3340" />
                <path d="M12 7l8 5-8 5z" fill="#fff" />
              </Ico>
              <span>YouTube</span>
            </Bookmark>
            <Bookmark $gap={17}>
              <Ico width={24} height={32} viewBox="0 0 24 32">
                <path d="M12 0c7 0 12 5 12 12 0 8-8 12-12 20C8 24 0 20 0 12 0 5 5 0 12 0z" fill="#f3b92f" />
                <path d="M4 3C6 1 9 0 12 0l4 1L5 13z" fill="#e0483a" />
                <path d="M12 0c6 0 12 4 12 10L17 8z" fill="#3f7de8" />
                <path d="M24 10c0 8-8 13-12 22l-3-5L23 9z" fill="#3fa15a" />
                <circle cx="12" cy="12" r="4.500" fill="#5a3f30" />
              </Ico>
              <span>Maps</span>
            </Bookmark>
            <Bookmark $gap={12}>
              <Ico width={32} height={32} viewBox="0 0 32 32">
                <circle cx="16" cy="16" r="16" fill="#9138e8" />
                <path d="M11 15v7c0 7 10 7 10 0v-7" fill="none" stroke="#fff" strokeWidth="3" />
                <path d="M16 5l6 4v2l-6-3.500L10 11V9z" fill="#fff" />
              </Ico>
              <span>udemy</span>
            </Bookmark>
            <Bookmark $gap={14}>
              <FolderIcon />
              <span>Imported from Go...</span>
            </Bookmark>
          </BookmarkList>
          <BarDivider $last />
          <AllBookmarks $gap={14}>
            <FolderIcon />
            <span>All Bookmarks</span>
          </AllBookmarks>
        </BookmarksBar>

        <Viewport>
          <PageFrame>
            <Page>
              <PageTitle>Donations Overview</PageTitle>
              <Section>
                <SectionTitle>Total Donation</SectionTitle>
                <TotalAmount>₹ 99100.75</TotalAmount>
              </Section>
              <SectionTitle>Donor Details</SectionTitle>
              <TableWrap>
                <Table>
                  <colgroup>
                    <col width="428" />
                    <col width="676" />
                    <col width="617" />
                    <col />
                  </colgroup>
                  <thead>
                    <tr>
                      <HeadCell>Name</HeadCell>
                      <HeadCell>Email</HeadCell>
                      <HeadCell>Phone(s)</HeadCell>
                      <HeadCell>Donations</HeadCell>
                    </tr>
                  </thead>
                  <tbody>
                    {donors.map((d, i) => (
                      <tr key={i}>
                        <Cell>{d.name}</Cell>
                        <Cell>{d.email}</Cell>
                        <Cell>{d.phone}</Cell>
                        <Cell>
                          <DonationList>
                            <li>{d.donation}</li>
                          </DonationList>
                        </Cell>
                      </tr>
                    ))}
                  </tbody>
                </Table>
              </TableWrap>
            </Page>
            <DockShadow />
          </PageFrame>
          <ScrollTrack>
            <ScrollThumb />
          </ScrollTrack>
        </Viewport>
      </BrowserWindow>

      <Dock>
        {dockApps.map(renderDockItem)}
        <DockDivider $l={9} $r={9} />
        {pinnedApps.map(renderDockItem)}
        <DockDivider $l={12} $r={6} />
        <DockThumbs />
      </Dock>
    </Screen>
  )
}

export default App
